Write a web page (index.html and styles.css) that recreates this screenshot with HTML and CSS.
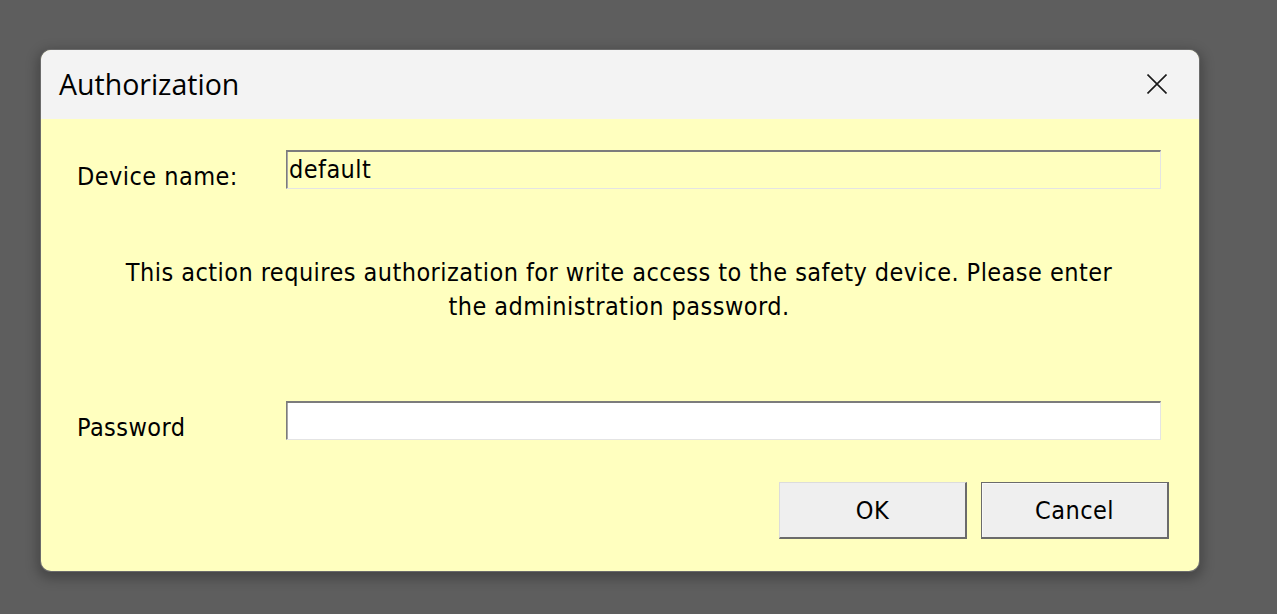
FILE: index.html
```html
<!DOCTYPE html>
<html lang="en">
<head>
<meta charset="utf-8">
<title>Authorization</title>
<link rel="stylesheet" href="styles.css">
</head>
<body>
<div class="page">
  <div class="dialog">
    <div class="titlebar">
      <span class="title">Authorization</span>
      <span class="close" aria-label="Close">
        <svg width="20" height="20" viewBox="0 0 20 20"><path d="M0.5 0.5 L19.5 19.5 M19.5 0.5 L0.5 19.5" stroke="#1b1b1b" stroke-width="1.6" fill="none"/></svg>
      </span>
    </div>
    <div class="content">
      <div class="row row-device">
        <label class="label">Device name:</label>
        <div class="field field-readonly">default</div>
      </div>
      <p class="message">This action requires authorization for write access to the safety device. Please enter<br>the administration password.</p>
      <div class="row row-password">
        <label class="label label-pw">Password</label>
        <div class="field field-input"></div>
      </div>
      <div class="buttons">
        <button class="btn btn-ok">OK</button>
        <button class="btn btn-cancel">Cancel</button>
      </div>
    </div>
  </div>
</div>
</body>
</html>
```

FILE: styles.css
```css
html, body {
  margin: 0;
  padding: 0;
  background: #5e5e5e;
  width: 1277px;
  height: 614px;
  overflow: hidden;
}

.page {
  padding: 50px 0 0 41px;
}

.dialog {
  width: 1158px;
  height: 521px;
  border-radius: 10px;
  overflow: hidden;
  background: #ffffbf;
  box-shadow: 0 0 0 1px #6b6b6b, 0 4px 12px 4px rgba(0, 0, 0, 0.25);
  display: flex;
  flex-direction: column;
}

.titlebar {
  height: 69px;
  flex: none;
  background: #f3f3f3;
  display: flex;
  align-items: center;
  justify-content: space-between;
  padding: 0 32px 0 18px;
}

.title {
  font-family: "Open Sans", "Noto Sans", sans-serif;
  font-size: 28.5px;
  color: #000;
  position: relative;
  top: -1px;
}

.close {
  display: flex;
  width: 20px;
  height: 20px;
  position: relative;
  top: -1px;
}

.content {
  padding: 31px 38px 0 36px;
  font-family: "DejaVu Sans Condensed", "DejaVu Sans", sans-serif;
  font-size: 25px;
  letter-spacing: 0.45px;
  color: #000;
}

.row {
  display: flex;
  align-items: flex-start;
}

.label {
  width: 209px;
  flex: none;
  line-height: 34px;
  margin-top: 10px;
}

.label-pw {
  margin-top: 10px;
}

.field {
  flex: 1;
  height: 39px;
  box-sizing: border-box;
  border-style: solid;
  border-width: 2px 1px 1px 1px;
  border-color: #7c7c7c #e4e4e4 #e4e4e4 #7c7c7c;
  box-shadow: inset 1px 0 0 #a8a8a8;
  padding: 2px 0 0 2px;
  line-height: 32px;
}

.field-readonly {
  background: #ffffbf;
}

.field-input {
  background: #ffffff;
}

.message {
  margin: 62px 0 0 0;
  text-align: center;
  line-height: 34px;
  padding-left: 0;
}

.row-password {
  margin-top: 77px;
}

.buttons {
  display: flex;
  justify-content: flex-end;
  gap: 14px;
  margin-top: 37px;
  margin-right: -8px;
}

.btn {
  width: 188px;
  height: 57px;
  background: #efefef;
  font-family: "DejaVu Sans Condensed", "DejaVu Sans", sans-serif;
  font-size: 25px;
  letter-spacing: 0.45px;
  color: #000;
  border-style: solid;
  border-width: 1px 2px 2px 1px;
  border-color: #dcdcdc #6b6b6b #6b6b6b #dcdcdc;
  padding: 0;
  margin: 0;
}

.btn-cancel {
  border-color: #6b6b6b;
  border-width: 1px 2px 2px 1px;
  box-shadow: inset 1px 1px 0 #f8f8f8;
}
```
